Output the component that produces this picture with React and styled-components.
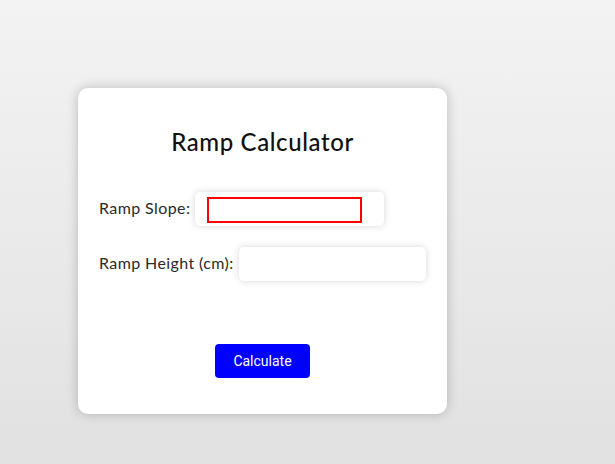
import React from 'react';
import styled, { createGlobalStyle } from 'styled-components';

const GlobalStyle = createGlobalStyle`
    html, body {
        margin: 0;
        padding: 0;
    }
    body {
        min-height: 100vh;
        background: linear-gradient(to bottom, #f3f3f3, #e1e1e1);
        font-family: Lato, "Open Sans", sans-serif;
    }
`;

const Page = styled.div`
    min-height: 100vh;
    box-sizing: border-box;
    padding: 88px 0 0 78px;
`;

const Card = styled.div`
    width: 369px;
    height: 326px;
    box-sizing: border-box;
    padding: 39px 21px 36px;
    background: #fff;
    border-radius: 10px;
    box-shadow: 0 0 12px rgba(0, 0, 0, 0.22);
    display: flex;
    flex-direction: column;
`;

const Title = styled.h2`
    margin: 0 0 35px;
    font-size: 24px;
    line-height: 30px;
    font-weight: 500;
    color: #111;
    text-align: center;
    letter-spacing: 0.6px;
`;

const Row = styled.div`
    display: flex;
    align-items: center;
    gap: 5px;
    margin-bottom: ${props => props.last ? '63px' : '21px'};
`;

const Label = styled.label`
    padding-bottom: 3px;
    font-size: 16px;
    color: #2a2a2a;
    letter-spacing: 0.4px;
    white-space: nowrap;
`;

const Field = styled.div`
    width: 189px;
    height: 34px;
    box-sizing: border-box;
    padding: 5px 11px;
    background: #fff;
    border-radius: 5px;
    box-shadow: 0 0 7px rgba(0, 0, 0, 0.16);
`;

const Input = styled.input`
    display: block;
    width: ${props => props.outlined ? '155px' : '100%'};
    height: 26px;
    box-sizing: border-box;
    margin: 0 0 0 1px;
    padding: 0 4px;
    border: ${props => props.outlined ? '2px solid #f00' : 'none'};
    outline: none;
    background: transparent;
    font-size: 14px;
`;

const Button = styled.button`
    align-self: center;
    width: 95px;
    height: 34px;
    border: none;
    border-radius: 4px;
    background: #0000ff;
    color: #fff;
    font-family: Roboto, "Liberation Sans", sans-serif;
    font-size: 14px;
    cursor: pointer;
`;

export default function App() {
    return (
        <Page>
            <GlobalStyle />
            <Card>
                <Title>Ramp Calculator</Title>
                <Row>
                    <Label>Ramp Slope:</Label>
                    <Field>
                        <Input outlined />
                    </Field>
                </Row>
                <Row last>
                    <Label>Ramp Height (cm):</Label>
                    <Field>
                        <Input />
                    </Field>
                </Row>
                <Button>Calculate</Button>
            </Card>
        </Page>
    );
}
